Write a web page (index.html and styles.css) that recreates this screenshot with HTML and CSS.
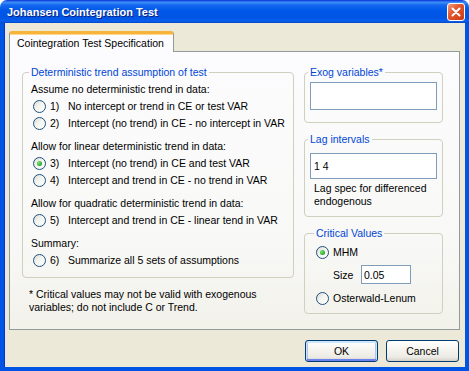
FILE: index.html
```html
<!DOCTYPE html>
<html lang="en">
<head>
    <meta charset="UTF-8">
    <title>Johansen Cointegration Test</title>
    <link rel="stylesheet" href="styles.css">
</head>
<body>
    <div class="window">
        <div class="titlebar">
            <span class="title">Johansen Cointegration Test</span>
            <span class="close">
                <svg width="16" height="16" viewBox="0 0 16 16"><path d="M4.5 4.5 L11.5 11.5 M11.5 4.5 L4.5 11.5" stroke="#fff" stroke-width="2" stroke-linecap="round"/></svg>
            </span>
        </div>

        <div class="client">
            <div class="tabs">
                <div class="tab active">Cointegration Test Specification</div>
            </div>

            <div class="panel">
                <div class="col-left">
                    <fieldset class="group trend">
                        <legend>Deterministic trend assumption of test</legend>

                        <div class="section">
                            <div class="head">Assume no deterministic trend in data:</div>
                            <div class="opt"><span class="radio"></span><span class="num">1)</span>No intercept or trend in CE or test VAR</div>
                            <div class="opt"><span class="radio"></span><span class="num">2)</span>Intercept (no trend) in CE - no intercept in VAR</div>
                        </div>
                        <div class="section">
                            <div class="head">Allow for linear deterministic trend in data:</div>
                            <div class="opt"><span class="radio checked"></span><span class="num">3)</span>Intercept (no trend) in CE and test VAR</div>
                            <div class="opt"><span class="radio"></span><span class="num">4)</span>Intercept and trend in CE - no trend in VAR</div>
                        </div>
                        <div class="section">
                            <div class="head">Allow for quadratic deterministic trend in data:</div>
                            <div class="opt"><span class="radio"></span><span class="num">5)</span>Intercept and trend in CE - linear tend in VAR</div>
                        </div>
                        <div class="section">
                            <div class="head">Summary:</div>
                            <div class="opt"><span class="radio"></span><span class="num">6)</span>Summarize all 5 sets of assumptions</div>
                        </div>
                    </fieldset>

                    <p class="note">* Critical values may not be valid with exogenous<br>variables; do not include C or Trend.</p>
                </div>

                <div class="col-right">
                    <fieldset class="group exog">
                        <legend>Exog variables*</legend>
                        <input type="text" class="edit tall" value="">
                    </fieldset>

                    <fieldset class="group lags">
                        <legend>Lag intervals</legend>
                        <input type="text" class="edit" value="1 4">
                        <p class="hint">Lag spec for differenced<br>endogenous</p>
                    </fieldset>

                    <fieldset class="group critical">
                        <legend>Critical Values</legend>
                        <div class="opt"><span class="radio checked"></span>MHM</div>
                        <div class="size-row">
                            <span class="size-label">Size</span>
                            <input type="text" class="edit small" value="0.05">
                        </div>
                        <div class="opt osterwald"><span class="radio"></span>Osterwald-Lenum</div>
                    </fieldset>
                </div>
            </div>

            <div class="buttons">
                <button type="button" class="btn default">OK</button>
                <button type="button" class="btn">Cancel</button>
            </div>
        </div>
    </div>
</body>
</html>
```

FILE: styles.css
```css
/* Basic Reset */
* {
    margin: 0;
    padding: 0;
    box-sizing: border-box;
}

body {
    font-family: "Liberation Sans", Arial, sans-serif;
    font-size: 10.5px;
    color: #000;
    background: #fff;
}

.window {
    width: 469px;
    height: 371px;
    display: flex;
    flex-direction: column;
}

/* Title bar */
.titlebar {
    height: 23px;
    flex: none;
    display: flex;
    align-items: center;
    justify-content: space-between;
    padding: 0 4px 0 7px;
    border-radius: 7px 7px 0 0;
    background: linear-gradient(to bottom, #0831d9 0%, #3d8ef7 10%, #1468ee 22%, #0058e8 45%, #0054e3 75%, #0a5fee 92%, #0046c8 100%);
}

.title {
    color: #fff;
    font-weight: bold;
    font-size: 11px;
    text-shadow: 1px 1px 0 #0a1e80;
}

.close {
    width: 18px;
    height: 18px;
    display: flex;
    align-items: center;
    justify-content: center;
    border: 1px solid #fff;
    border-radius: 3px;
    background: linear-gradient(to bottom right, #f09b7e 0%, #e2582f 40%, #cc3b14 100%);
}

/* Client area */
.client {
    flex: 1;
    background: #ece9d8;
    border: 4px solid #0054e3;
    border-top: none;
    padding: 8px 5px 0 5px;
    box-shadow: inset 1px 0 0 #0831d9;
}

.tabs {
    display: flex;
    position: relative;
    z-index: 1;
    margin-bottom: -1px;
}

.tab {
    width: 165px;
    height: 21px;
    padding: 1px 0 0 7px;
    line-height: 17px;
    background: #fcfcfe;
    border: 1px solid #919b9c;
    border-bottom: none;
    border-top: 3px solid #f8b43a;
    border-radius: 3px 3px 0 0;
    box-shadow: inset 0 1px 0 #ffd98b;
}

.panel {
    height: 279px;
    display: flex;
    gap: 10px;
    padding: 13px 0 0 12px;
    border: 1px solid #919b9c;
    background: linear-gradient(to bottom, #fcfcfe 0%, #f8f8f6 70%, #f2f1ea 100%);
}

/* Group boxes */
.group {
    min-width: 0;
    border: 1px solid #d0d0bf;
    border-radius: 4px;
}

.group legend {
    color: #0046d5;
    line-height: 14px;
    padding: 0 2px;
    margin-left: -2px;
}

.col-left {
    width: 272px;
}

.trend {
    padding: 2px 8px 9px 8px;
}

.section + .section {
    margin-top: 7px;
}

.head {
    height: 16px;
    line-height: 16px;
}

.opt {
    height: 16px;
    display: flex;
    align-items: center;
    margin-top: 1px;
    padding-left: 2px;
    white-space: nowrap;
}

.num {
    width: 18px;
}

.radio {
    width: 13px;
    height: 13px;
    flex: none;
    margin-right: 4px;
    border: 1px solid #1c5180;
    border-radius: 50%;
    background: linear-gradient(135deg, #dcdcd7 0%, #f4f4f0 45%, #ffffff 100%);
    display: flex;
    align-items: center;
    justify-content: center;
}

.radio.checked::after {
    content: "";
    width: 5px;
    height: 5px;
    border-radius: 50%;
    background: radial-gradient(circle at 35% 35%, #7ae476 0%, #32b22f 60%, #1b8d18 100%);
}

.note {
    margin-top: 10px;
    padding-left: 7px;
    line-height: 13px;
}

.col-right {
    width: 139px;
}

.exog {
    padding: 3px 5px 12px 5px;
}

.lags {
    margin-top: 9px;
    padding: 7px 5px 8px 5px;
}

.critical {
    margin-top: 9px;
    padding: 4px 5px 7px 11px;
}

.critical .opt {
    margin-top: 0;
    padding-left: 0;
}

.osterwald {
    margin-top: 6px !important;
}

.edit {
    display: block;
    width: 127px;
    height: 26px;
    border: 1px solid #7f9db9;
    background: #fff;
    font: inherit;
    color: #000;
    padding: 0 3px;
    outline: none;
}

.edit.tall {
    height: 28px;
}

.edit.small {
    width: 50px;
    height: 19px;
    padding: 0 2px;
}

.hint {
    margin-top: 3px;
    padding-left: 4px;
    line-height: 13px;
}

.size-row {
    display: flex;
    align-items: center;
    margin-top: 5px;
    padding-left: 17px;
}

.size-label {
    width: 28px;
}

/* Dialog buttons */
.buttons {
    display: flex;
    justify-content: flex-end;
    gap: 8px;
    margin-top: 10px;
    padding-right: 1px;
}

.btn {
    width: 73px;
    height: 22px;
    font: inherit;
    color: #000;
    border: 1px solid #003c74;
    border-radius: 3px;
    background: linear-gradient(to bottom, #ffffff 0%, #f6f5f0 40%, #ecebe6 80%, #d6d0c5 100%);
    cursor: pointer;
}

.btn.default {
    box-shadow: inset 0 1px 0 1px #cee7ff, inset 0 -1px 0 1px #6982ee, inset 1px 0 0 1px #a9c6f5, inset -1px 0 0 1px #a9c6f5;
}
```
